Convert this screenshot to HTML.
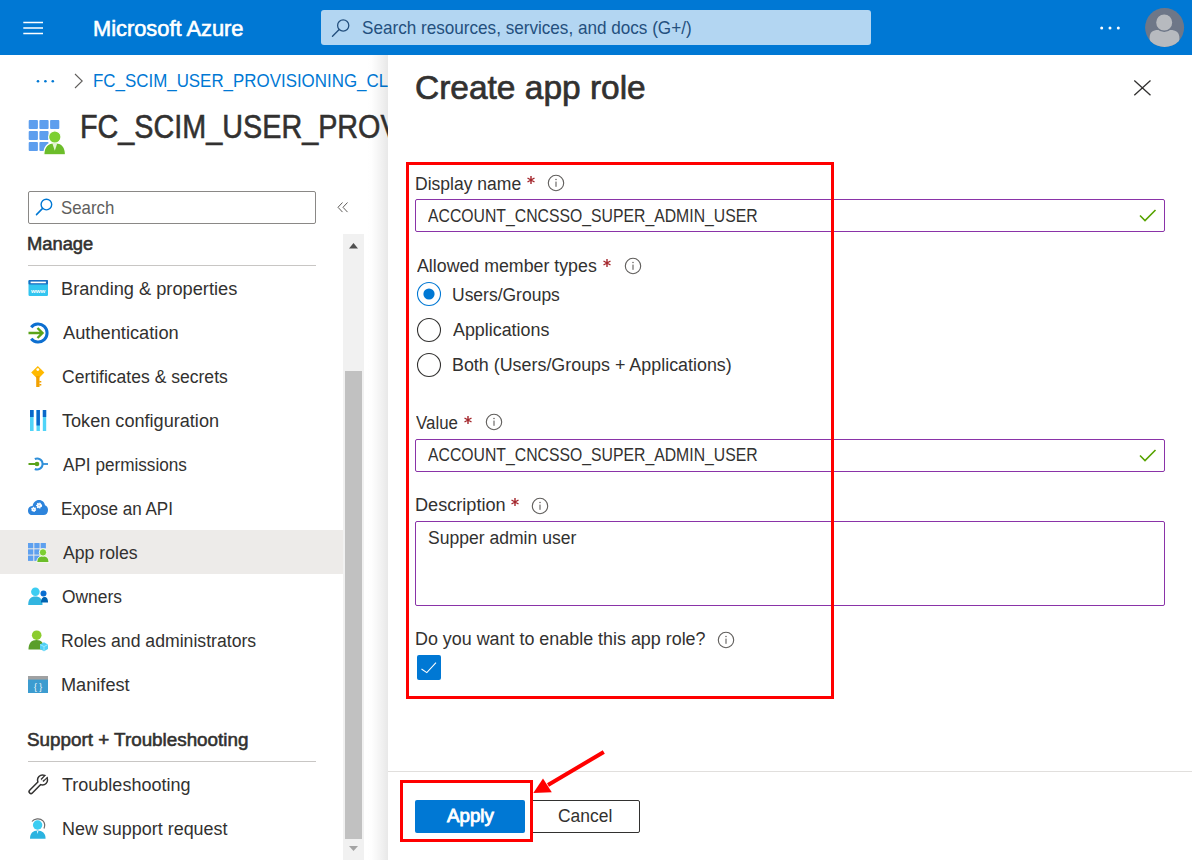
<!DOCTYPE html>
<html><head><meta charset="utf-8"><title>Create app role</title>
<style>
html,body{margin:0;padding:0;}
body{width:1193px;height:860px;position:relative;overflow:hidden;background:#fff;font-family:"Liberation Sans",sans-serif;}
.t{position:absolute;white-space:nowrap;line-height:1em;}
</style></head><body>
<svg style="position:absolute;left:30px;top:75px;" width="30" height="12" viewBox="0 0 30 12"><circle cx="8" cy="6.2" r="1.3" fill="#0078d4"/><circle cx="15.4" cy="6.2" r="1.3" fill="#0078d4"/><circle cx="22.8" cy="6.2" r="1.3" fill="#0078d4"/></svg>
<svg style="position:absolute;left:70px;top:70px;" width="16" height="20" viewBox="0 0 16 20"><path d="M5 4 L12.2 11 L5 18" fill="none" stroke="#605e5c" stroke-width="1.1"/></svg>
<div class="t" style="left:93.35px;top:72.73px;font-size:17.80px;color:#0078d4;transform:scaleX(0.9510);transform-origin:0 0;">FC_SCIM_USER_PROVISIONING_CLOUD</div>
<div class="t" style="left:80.40px;top:110.06px;font-size:33.60px;color:#323130;transform:scaleX(0.8566);transform-origin:0 0;-webkit-text-stroke:0.6px #323130;">FC_SCIM_USER_PROVISIONING_CLOUD</div>
<svg style="position:absolute;left:28px;top:119px;" width="42" height="40" viewBox="0 0 42 40"><rect x="0.70" y="1" width="9.2" height="9" rx="0.9" fill="#5d9eee"/><rect x="11.40" y="1" width="9.2" height="9" rx="0.9" fill="#5d9eee"/><rect x="22.10" y="1" width="9.2" height="9" rx="0.9" fill="#5d9eee"/><rect x="0.70" y="12" width="9.2" height="9" rx="0.9" fill="#5d9eee"/><rect x="11.40" y="12" width="9.2" height="9" rx="0.9" fill="#5d9eee"/><rect x="0.70" y="23" width="9.2" height="9" rx="0.9" fill="#5d9eee"/><rect x="11.40" y="23" width="9.2" height="9" rx="0.9" fill="#5d9eee"/><path d="M15.8 35.8 C15.8 28 19.5 23.7 26.8 23.7 C34 23.7 37.5 28 37.5 35.8 Z" fill="#6cbd2a" stroke="#fff" stroke-width="1.2"/><circle cx="26.8" cy="18" r="6.2" fill="#7ccf32" stroke="#fff" stroke-width="1.2"/><path d="M24.3 24.3 L29.3 24.3 L26.8 31.8 Z" fill="#e4f5d4"/></svg>
<div style="position:absolute;left:28px;top:191px;width:288px;height:33px;box-sizing:border-box;border:1px solid #8a8886;border-radius:2px;"></div>
<svg style="position:absolute;left:34px;top:196px;" width="22" height="22" viewBox="0 0 22 22"><circle cx="12.4" cy="8.6" r="5.3" fill="none" stroke="#0078d4" stroke-width="1.4"/><path d="M8.6 12.4 L2.5 18.6" stroke="#0078d4" stroke-width="1.5" stroke-linecap="round"/></svg>
<div class="t" style="left:61.24px;top:199.63px;font-size:17.80px;color:#605e5c;transform:scaleX(0.9452);transform-origin:0 0;">Search</div>
<svg style="position:absolute;left:335px;top:200px;" width="16" height="16" viewBox="0 0 16 16"><path d="M7.5 2.5 L3 7.3 L7.5 12.1 M12.5 2.5 L8 7.3 L12.5 12.1" fill="none" stroke="#605e5c" stroke-width="1"/></svg>
<div class="t" style="left:27.38px;top:235.59px;font-size:17.50px;color:#323130;transform:scaleX(1.0479);transform-origin:0 0;-webkit-text-stroke:0.55px #323130;">Manage</div>
<div style="position:absolute;left:28px;top:265px;width:288px;height:1px;background:#c8c6c4;"></div>
<div style="position:absolute;left:0px;top:530px;width:343px;height:44px;background:#edebe9;"></div>
<div class="t" style="left:61.14px;top:280.90px;font-size:17.60px;color:#323130;transform:scaleX(1.0359);transform-origin:0 0;">Branding &amp; properties</div>
<div class="t" style="left:62.60px;top:324.90px;font-size:17.60px;color:#323130;transform:scaleX(1.0376);transform-origin:0 0;">Authentication</div>
<div class="t" style="left:61.72px;top:368.90px;font-size:17.60px;color:#323130;transform:scaleX(0.9974);transform-origin:0 0;">Certificates &amp; secrets</div>
<div class="t" style="left:62.24px;top:412.90px;font-size:17.60px;color:#323130;transform:scaleX(1.0291);transform-origin:0 0;">Token configuration</div>
<div class="t" style="left:62.60px;top:456.90px;font-size:17.60px;color:#323130;transform:scaleX(0.9744);transform-origin:0 0;">API permissions</div>
<div class="t" style="left:61.23px;top:500.90px;font-size:17.60px;color:#323130;transform:scaleX(0.9700);transform-origin:0 0;">Expose an API</div>
<div class="t" style="left:62.60px;top:544.90px;font-size:17.60px;color:#323130;transform:scaleX(1.0035);transform-origin:0 0;">App roles</div>
<div class="t" style="left:61.82px;top:588.90px;font-size:17.60px;color:#323130;transform:scaleX(0.9878);transform-origin:0 0;">Owners</div>
<div class="t" style="left:61.19px;top:632.90px;font-size:17.60px;color:#323130;transform:scaleX(1.0029);transform-origin:0 0;">Roles and administrators</div>
<div class="t" style="left:61.15px;top:676.90px;font-size:17.60px;color:#323130;transform:scaleX(1.0317);transform-origin:0 0;">Manifest</div>
<div class="t" style="left:27.15px;top:731.94px;font-size:17.50px;color:#323130;transform:scaleX(1.0761);transform-origin:0 0;-webkit-text-stroke:0.55px #323130;">Support + Troubleshooting</div>
<div style="position:absolute;left:28px;top:761px;width:288px;height:1px;background:#c8c6c4;"></div>
<div class="t" style="left:62.34px;top:776.50px;font-size:17.60px;color:#323130;transform:scaleX(1.0235);transform-origin:0 0;">Troubleshooting</div>
<div class="t" style="left:61.86px;top:820.80px;font-size:17.60px;color:#323130;transform:scaleX(1.0195);transform-origin:0 0;">New support request</div>
<svg style="position:absolute;left:28px;top:279px;" width="21" height="19" viewBox="0 0 21 19"><rect x="0.5" y="1" width="19.5" height="16" rx="1.2" fill="#32c5f0"/><rect x="0.5" y="1" width="19.5" height="4.6" rx="1" fill="#1b6ec2"/><rect x="2.6" y="2.6" width="15.3" height="1.6" fill="#fff"/><text x="10.2" y="13.6" font-family="Liberation Sans" font-size="6.2" font-weight="700" fill="#fff" text-anchor="middle">www</text></svg>
<svg style="position:absolute;left:27px;top:321px;" width="24" height="24" viewBox="0 0 24 24"><path d="M4.2 6.2 A9 9 0 1 1 4.2 17.8" fill="none" stroke="#0d6fd0" stroke-width="3"/><path d="M1.5 12 L15.5 12 M10.5 7 L15.5 12 L10.5 17" fill="none" stroke="#5aa31a" stroke-width="2.4"/></svg>
<svg style="position:absolute;left:28px;top:364px;" width="20" height="26" viewBox="0 0 20 26"><path d="M9.8 2 L16.4 8.6 L9.8 15.2 L3.2 8.6 Z" fill="#ffb900"/><circle cx="9.8" cy="5.6" r="1.4" fill="#fff"/><rect x="8.2" y="12" width="3.3" height="11" fill="#f2a100"/><rect x="11.3" y="17" width="2" height="1.5" fill="#f2a100"/><rect x="11.3" y="20" width="2" height="1.5" fill="#f2a100"/></svg>
<svg style="position:absolute;left:28px;top:408px;" width="22" height="26" viewBox="0 0 22 26"><rect x="2" y="2" width="3.6" height="21" fill="#50d4f8"/><rect x="2" y="2" width="3.6" height="7" fill="#0a68c9"/><rect x="8.5" y="2" width="3.4" height="21" fill="#50d4f8"/><rect x="8.5" y="2" width="3.4" height="15.5" fill="#0a68c9"/><rect x="14.8" y="2" width="3.4" height="21" fill="#50d4f8"/><rect x="14.8" y="2" width="3.4" height="7" fill="#0a68c9"/></svg>
<svg style="position:absolute;left:27px;top:455px;" width="24" height="18" viewBox="0 0 24 18"><path d="M1.5 9 L8 9" stroke="#5aa31a" stroke-width="2"/><circle cx="10" cy="9" r="2.3" fill="#5aa31a"/><path d="M7.8 4 A5.5 5.5 0 1 1 7.8 14" fill="none" stroke="#2f8fd9" stroke-width="2"/><path d="M15.5 9 L21 9" stroke="#2f8fd9" stroke-width="1.8"/></svg>
<svg style="position:absolute;left:27px;top:497px;" width="22" height="20" viewBox="0 0 22 20"><path d="M5 18 C1.8 18 1 15.5 1 13.5 C1 10.8 3 9 5.6 9 C6.2 5.5 8.8 3 12 3 C15.2 3 17.6 5.5 18 8.2 C20 8.8 21 10.8 21 13 C21 16 19.2 18 16.5 18 Z" fill="#2d84dc"/><circle cx="6.7" cy="12.4" r="1.9" fill="#fff" stroke="#fff" stroke-width="1.3" stroke-dasharray="1.1 0.7"/><circle cx="6.7" cy="12.4" r="0.7" fill="#9cc6f0"/><circle cx="12.1" cy="8.6" r="2.3" fill="#fff" stroke="#fff" stroke-width="1.4" stroke-dasharray="1.2 0.8"/><circle cx="12.1" cy="8.6" r="0.8" fill="#9cc6f0"/></svg>
<svg style="position:absolute;left:28px;top:543px;" width="22" height="22" viewBox="0 0 22 22"><rect x="0.0" y="0.0" width="5.3" height="5.3" fill="#5ea0ef"/><rect x="6.3" y="0.0" width="5.3" height="5.3" fill="#5ea0ef"/><rect x="12.6" y="0.0" width="5.3" height="5.3" fill="#5ea0ef"/><rect x="0.0" y="6.3" width="5.3" height="5.3" fill="#5ea0ef"/><rect x="6.3" y="6.3" width="5.3" height="5.3" fill="#5ea0ef"/><rect x="0.0" y="12.6" width="5.3" height="5.3" fill="#5ea0ef"/><rect x="6.3" y="12.6" width="5.3" height="5.3" fill="#5ea0ef"/><path d="M8.8 19.6 C8.8 15 11.2 12.9 15 12.9 C18.8 12.9 21 15 21 19.6 Z" fill="#6cbd2a" stroke="#fff" stroke-width="0.9"/><circle cx="15" cy="9.4" r="3.7" fill="#7ccf32" stroke="#fff" stroke-width="0.9"/></svg>
<svg style="position:absolute;left:27px;top:584px;" width="24" height="24" viewBox="0 0 24 24"><path d="M1.2 21 C1.2 15 4 12.6 8.4 12.6 C12.8 12.6 15.5 15 15.5 21 Z" fill="#32b5e0"/><circle cx="8.4" cy="7.8" r="4.3" fill="#3ccdf2"/><path d="M14 18.5 C14 14.5 15.8 13 17.6 13 C19.6 13 21 14.5 21 18.5 Z" fill="#0063b1"/><circle cx="16.5" cy="9.5" r="3" fill="#0a6ed1"/></svg>
<svg style="position:absolute;left:27px;top:628px;" width="24" height="24" viewBox="0 0 24 24"><path d="M1.5 21.5 C1.5 15 4.5 12 9.5 12 C14.5 12 17 15 17 21.5 Z" fill="#5a9e2a"/><circle cx="9.7" cy="7.2" r="4.8" fill="#8ccc2e"/><path d="M13 16.5 L17 14.2 L21 16.5 L21 21 L17 23.2 L13 21 Z" fill="#4fd0f5"/><path d="M13 16.5 L17 18.6 L21 16.5 M17 18.6 L17 23.2" fill="none" stroke="#a8ecff" stroke-width="0.8"/></svg>
<svg style="position:absolute;left:28px;top:675px;" width="21" height="19" viewBox="0 0 21 19"><rect x="0" y="1" width="20" height="17" fill="#3c9cd0"/><rect x="0" y="1" width="20" height="3.6" fill="#a0a1a2"/><text x="10" y="14.6" font-family="Liberation Sans" font-size="8.5" fill="#fff" text-anchor="middle">{ }</text></svg>
<svg style="position:absolute;left:26px;top:772px;" width="24" height="25" viewBox="0 0 24 25"><defs><clipPath id="wh"><circle cx="16.5" cy="8" r="5.9"/></clipPath></defs><circle cx="16.5" cy="8" r="5.75" fill="#323130"/><path d="M16.5 8 L5 19.6" stroke="#323130" stroke-width="5.3" stroke-linecap="round"/><circle cx="16.5" cy="8" r="4.25" fill="#fff"/><path d="M16.5 8 L5 19.6" stroke="#fff" stroke-width="2.3" stroke-linecap="round"/><g clip-path="url(#wh)"><path d="M16 8.5 L23 1.5" stroke="#323130" stroke-width="4.2"/><path d="M16 8.5 L23 1.5" stroke="#fff" stroke-width="1.5"/></g><path d="M17.8 7 L23 1.5" stroke="#fff" stroke-width="1.8"/></svg>
<svg style="position:absolute;left:27px;top:816px;" width="24" height="24" viewBox="0 0 24 24"><path d="M3 22.7 C3 17.4 6 14.6 10.6 14.6 C15.2 14.6 18.6 17.4 18.6 22.7 Z" fill="#2bb3e0"/><circle cx="10.6" cy="9" r="4.7" fill="#3ccdf2"/><path d="M5 5.5 C7 2.5 13 1.8 16 4.8 C18 7 18 10 17 12.5" fill="none" stroke="#6d6d6d" stroke-width="1.2"/><path d="M9.8 15 L10.6 18 L11.4 15 Z" fill="#e0f7ff"/></svg>
<div style="position:absolute;left:343px;top:234px;width:21px;height:626px;background:#f1f1f1;"></div>
<div style="position:absolute;left:345px;top:371px;width:17px;height:468px;background:#c1c1c1;"></div>
<svg style="position:absolute;left:343px;top:238px;" width="21" height="14" viewBox="0 0 21 14"><path d="M6 10.5 L15 10.5 L10.5 5 Z" fill="#505050"/></svg>
<svg style="position:absolute;left:343px;top:842px;" width="21" height="14" viewBox="0 0 21 14"><path d="M6 4 L15 4 L10.5 9 Z" fill="#a3a3a3"/></svg>
<div style="position:absolute;left:364px;top:55px;width:24px;height:805px;background:linear-gradient(to right, rgba(0,0,0,0) 0%, rgba(0,0,0,0.005) 30%, rgba(0,0,0,0.035) 58%, rgba(0,0,0,0.075) 88%, rgba(0,0,0,0.09) 100%);"></div>
<div style="position:absolute;left:388px;top:55px;width:805px;height:805px;background:#fff;"></div>
<div class="t" style="left:414.73px;top:71.46px;font-size:33.60px;color:#323130;transform:scaleX(0.9969);transform-origin:0 0;-webkit-text-stroke:0.7px #323130;">Create app role</div>
<svg style="position:absolute;left:1130px;top:76px;" width="26" height="24" viewBox="0 0 26 24"><path d="M4.3 4.4 L20.5 19.3 M20.5 4.4 L4.3 19.3" stroke="#323130" stroke-width="1.3"/></svg>
<div class="t" style="left:415.20px;top:175.50px;font-size:17.60px;color:#323130;transform:scaleX(0.9965);transform-origin:0 0;">Display name</div>
<svg style="position:absolute;left:525.5px;top:175px;" width="12" height="12" viewBox="0 0 12 12"><path d="M5 1 L5 9 M1.5 3 L8.5 7 M1.5 7 L8.5 3" stroke="#a4262c" stroke-width="1.4"/></svg>
<svg style="position:absolute;left:546.4px;top:173.2px;" width="20" height="20" viewBox="0 0 20 20"><circle cx="10" cy="10" r="7.7" fill="none" stroke="#605e5c" stroke-width="1.1"/><rect x="9.45" y="8.6" width="1.1" height="5.2" fill="#605e5c"/><circle cx="10" cy="6.6" r="0.75" fill="#605e5c"/></svg>
<div style="position:absolute;left:415px;top:199px;width:750px;height:33px;box-sizing:border-box;border:1px solid #8a33a8;border-radius:2px;"></div>
<svg style="position:absolute;left:1136px;top:205.5px;" width="24" height="20" viewBox="0 0 24 20"><path d="M4 9.5 L9 14.5 L19.5 4" fill="none" stroke="#57a300" stroke-width="1.6"/></svg>
<div class="t" style="left:428.00px;top:208.00px;font-size:17.60px;color:#323130;transform:scaleX(0.8968);transform-origin:0 0;">ACCOUNT_CNCSSO_SUPER_ADMIN_USER</div>
<div class="t" style="left:416.60px;top:257.70px;font-size:17.60px;color:#323130;transform:scaleX(1.0101);transform-origin:0 0;">Allowed member types</div>
<svg style="position:absolute;left:602px;top:258px;" width="12" height="12" viewBox="0 0 12 12"><path d="M5 1 L5 9 M1.5 3 L8.5 7 M1.5 7 L8.5 3" stroke="#a4262c" stroke-width="1.4"/></svg>
<svg style="position:absolute;left:622.5px;top:256px;" width="20" height="20" viewBox="0 0 20 20"><circle cx="10" cy="10" r="7.7" fill="none" stroke="#605e5c" stroke-width="1.1"/><rect x="9.45" y="8.6" width="1.1" height="5.2" fill="#605e5c"/><circle cx="10" cy="6.6" r="0.75" fill="#605e5c"/></svg>
<svg style="position:absolute;left:415px;top:280px;" width="28" height="28" viewBox="0 0 28 28"><circle cx="14" cy="14" r="11.5" fill="none" stroke="#0078d4" stroke-width="1.1"/><circle cx="14" cy="14" r="5.6" fill="#0078d4"/></svg>
<svg style="position:absolute;left:415px;top:316px;" width="28" height="28" viewBox="0 0 28 28"><circle cx="14" cy="14" r="11.5" fill="none" stroke="#323130" stroke-width="1.1"/></svg>
<svg style="position:absolute;left:415px;top:351px;" width="28" height="28" viewBox="0 0 28 28"><circle cx="14" cy="14" r="11.5" fill="none" stroke="#323130" stroke-width="1.1"/></svg>
<div class="t" style="left:451.69px;top:286.50px;font-size:17.60px;color:#323130;transform:scaleX(0.9938);transform-origin:0 0;">Users/Groups</div>
<div class="t" style="left:453.00px;top:322.10px;font-size:17.60px;color:#323130;transform:scaleX(1.0154);transform-origin:0 0;">Applications</div>
<div class="t" style="left:451.57px;top:356.80px;font-size:17.60px;color:#323130;transform:scaleX(1.0162);transform-origin:0 0;">Both (Users/Groups + Applications)</div>
<div class="t" style="left:416.12px;top:414.90px;font-size:17.60px;color:#323130;transform:scaleX(0.9587);transform-origin:0 0;">Value</div>
<svg style="position:absolute;left:462.5px;top:415px;" width="12" height="12" viewBox="0 0 12 12"><path d="M5 1 L5 9 M1.5 3 L8.5 7 M1.5 7 L8.5 3" stroke="#a4262c" stroke-width="1.4"/></svg>
<svg style="position:absolute;left:483.5px;top:412.3px;" width="20" height="20" viewBox="0 0 20 20"><circle cx="10" cy="10" r="7.7" fill="none" stroke="#605e5c" stroke-width="1.1"/><rect x="9.45" y="8.6" width="1.1" height="5.2" fill="#605e5c"/><circle cx="10" cy="6.6" r="0.75" fill="#605e5c"/></svg>
<div style="position:absolute;left:415px;top:439px;width:750px;height:33px;box-sizing:border-box;border:1px solid #8a33a8;border-radius:2px;"></div>
<svg style="position:absolute;left:1136px;top:445.5px;" width="24" height="20" viewBox="0 0 24 20"><path d="M4 9.5 L9 14.5 L19.5 4" fill="none" stroke="#57a300" stroke-width="1.6"/></svg>
<div class="t" style="left:428.00px;top:446.90px;font-size:17.60px;color:#323130;transform:scaleX(0.8968);transform-origin:0 0;">ACCOUNT_CNCSSO_SUPER_ADMIN_USER</div>
<div class="t" style="left:415.15px;top:497.10px;font-size:17.60px;color:#323130;transform:scaleX(1.0299);transform-origin:0 0;">Description</div>
<svg style="position:absolute;left:509.5px;top:497px;" width="12" height="12" viewBox="0 0 12 12"><path d="M5 1 L5 9 M1.5 3 L8.5 7 M1.5 7 L8.5 3" stroke="#a4262c" stroke-width="1.4"/></svg>
<svg style="position:absolute;left:530.4px;top:495.5px;" width="20" height="20" viewBox="0 0 20 20"><circle cx="10" cy="10" r="7.7" fill="none" stroke="#605e5c" stroke-width="1.1"/><rect x="9.45" y="8.6" width="1.1" height="5.2" fill="#605e5c"/><circle cx="10" cy="6.6" r="0.75" fill="#605e5c"/></svg>
<div style="position:absolute;left:415px;top:521px;width:750px;height:85px;box-sizing:border-box;border:1px solid #8a33a8;border-radius:2px;"></div>
<div class="t" style="left:427.51px;top:529.70px;font-size:17.60px;color:#323130;transform:scaleX(0.9975);transform-origin:0 0;">Supper admin user</div>
<div class="t" style="left:415.17px;top:630.90px;font-size:17.60px;color:#323130;transform:scaleX(1.0172);transform-origin:0 0;">Do you want to enable this app role?</div>
<svg style="position:absolute;left:716px;top:629.5px;" width="20" height="20" viewBox="0 0 20 20"><circle cx="10" cy="10" r="7.7" fill="none" stroke="#605e5c" stroke-width="1.1"/><rect x="9.45" y="8.6" width="1.1" height="5.2" fill="#605e5c"/><circle cx="10" cy="6.6" r="0.75" fill="#605e5c"/></svg>
<div style="position:absolute;left:417px;top:655px;width:24px;height:25px;background:#0078d4;border-radius:2px;"></div>
<svg style="position:absolute;left:417px;top:655px;" width="24" height="25" viewBox="0 0 24 25"><path d="M4.5 14 L9.8 17.6 L19 7.6" fill="none" stroke="#fff" stroke-width="1.1"/></svg>
<div style="position:absolute;left:406px;top:162px;width:428px;height:537px;box-sizing:border-box;border:3px solid #ff0000;"></div>
<div style="position:absolute;left:388px;top:771px;width:804px;height:1px;background:#e1dfdd;"></div>
<div style="position:absolute;left:415px;top:800px;width:110px;height:33px;background:#0078d4;border-radius:2px;"></div>
<div class="t" style="left:447.00px;top:807.79px;font-size:17.50px;color:#ffffff;transform:scaleX(1.0697);transform-origin:0 0;-webkit-text-stroke:0.8px #ffffff;">Apply</div>
<div style="position:absolute;left:530px;top:800px;width:110px;height:33px;box-sizing:border-box;border:1px solid #323130;border-radius:2px;background:#fff;"></div>
<div class="t" style="left:558.23px;top:807.70px;font-size:17.60px;color:#323130;transform:scaleX(0.9922);transform-origin:0 0;">Cancel</div>
<div style="position:absolute;left:400px;top:779.5px;width:132.5px;height:62.5px;box-sizing:border-box;border:3px solid #ff0000;"></div>
<svg style="position:absolute;left:520px;top:740px;" width="100" height="70" viewBox="0 0 100 70"><path d="M83.8 12 L28 45" stroke="#ff0000" stroke-width="4"/><path d="M13.3 53 L23 38.4 L31.8 52.3 Z" fill="#ff0000"/></svg>
<div style="position:absolute;left:0;top:0;width:1192px;height:55px;background:#0078d4;"></div>
<svg style="position:absolute;left:20px;top:15px;" width="26" height="26" viewBox="0 0 26 26"><path d="M3.3 7.5 H23 M3.3 13 H23 M3.3 18.5 H23" stroke="#fff" stroke-width="1.35"/></svg>
<div class="t" style="left:92.95px;top:18.80px;font-size:21.50px;color:#ffffff;transform:scaleX(1.0155);transform-origin:0 0;-webkit-text-stroke:0.6px #ffffff;">Microsoft Azure</div>
<div style="position:absolute;left:321px;top:10px;width:550px;height:35px;background:#b3d6f2;border-radius:3px;"></div>
<svg style="position:absolute;left:328px;top:16px;" width="26" height="24" viewBox="0 0 26 24"><circle cx="15.2" cy="9.5" r="5.6" fill="none" stroke="#24507e" stroke-width="1.3"/><path d="M11.2 13.6 L4.5 20.2" stroke="#24507e" stroke-width="1.4" stroke-linecap="round"/></svg>
<div class="t" style="left:362.23px;top:19.09px;font-size:18.20px;color:#24507e;transform:scaleX(0.9411);transform-origin:0 0;">Search resources, services, and docs (G+/)</div>
<svg style="position:absolute;left:1095px;top:22px;" width="30" height="12" viewBox="0 0 30 12"><circle cx="6.7" cy="6" r="1.5" fill="#fff"/><circle cx="15" cy="6" r="1.5" fill="#fff"/><circle cx="23.3" cy="6" r="1.5" fill="#fff"/></svg>
<svg style="position:absolute;left:1144px;top:7px;" width="42" height="42" viewBox="0 0 42 42"><defs><clipPath id="av"><circle cx="20.6" cy="20.6" r="19.5"/></clipPath></defs><circle cx="20.6" cy="20.6" r="19.5" fill="#6e7788"/><g clip-path="url(#av)"><circle cx="20.2" cy="15.5" r="8" fill="#b7babf"/><path d="M5.6 40 L5.6 31 C5.6 25 9 23 14 23 L26.5 23 C31.5 23 35.4 25 35.4 31 L35.4 40 Z" fill="#b7babf"/><circle cx="20.2" cy="15.5" r="8.8" fill="#b7babf" stroke="#6e7788" stroke-width="1.6"/></g></svg>
</body></html>
